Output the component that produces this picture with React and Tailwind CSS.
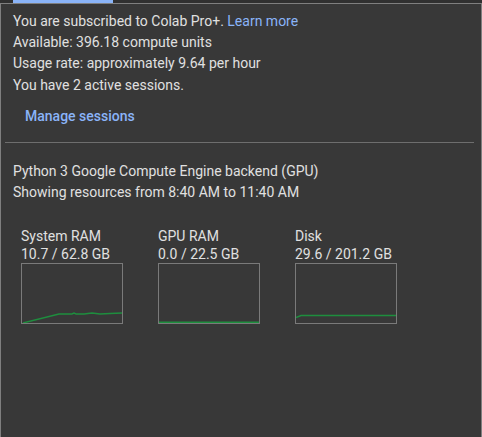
const charts = [
  {
    label: "System RAM",
    value: "10.7 / 62.8 GB",
    points: "1,59 37,50 50,50 52,49 54,50 62,50 70,49 78,50 88,49.5 100,49",
  },
  { label: "GPU RAM", value: "0.0 / 22.5 GB", points: "0,59 101,59", thick: true },
  { label: "Disk", value: "29.6 / 201.2 GB", points: "0,53.5 5,51.5 101,51.5" },
];

function Chart({ label, value, points, thick }) {
  return (
    <div className="flex flex-col w-[102px]">
      <div className="leading-[18px]">{label}</div>
      <div className="leading-[18px]">{value}</div>
      <div className="w-[102px] h-[61px] border border-[#7a7a7a]">
        <svg width="100" height="59" viewBox="0 0 100 59" className="block">
          <polyline
            points={points}
            fill="none"
            stroke="#1e8e3e"
            strokeWidth={thick ? 3 : 1.4}
          />
        </svg>
      </div>
    </div>
  );
}

export default function App() {
  return (
    <div
      className="w-[482px] h-[437px] bg-[#383838] text-[#e0e0e0] text-[14px] flex flex-col"
      style={{ fontFamily: "Roboto, 'Liberation Sans', sans-serif" }}
    >
      <div className="h-[3px] flex bg-[#303030]">
        <div className="ml-[13px] w-[100px] bg-[#8ab4f8]" />
      </div>
      <div className="flex-1 border-t border-l border-r border-[#7f7f7f] flex flex-col pt-[7px]">
        <div className="px-[12px] leading-[21.2px]">
          <p>
            You are subscribed to Colab Pro+.{" "}
            <a className="text-[#8ab4f8]">Learn more</a>
          </p>
          <p>Available: 396.18 compute units</p>
          <p>Usage rate: approximately 9.64 per hour</p>
          <p>You have 2 active sessions.</p>
        </div>
        <div className="px-[24px] pt-[10px] pb-[15px]">
          <button className="text-[#8ab4f8] font-medium leading-[21px]">
            Manage sessions
          </button>
        </div>
        <div className="mx-[4px] mr-[7px] h-px bg-[#6e6e6e]" />
        <div className="px-[12px] pt-[18px] leading-[21px]">
          <p>Python 3 Google Compute Engine backend (GPU)</p>
          <p>Showing resources from 8:40 AM to 11:40 AM</p>
        </div>
        <div className="flex gap-[35px] pl-[20px] pt-[24px]">
          {charts.map((c) => (
            <Chart key={c.label} {...c} />
          ))}
        </div>
      </div>
    </div>
  );
}
